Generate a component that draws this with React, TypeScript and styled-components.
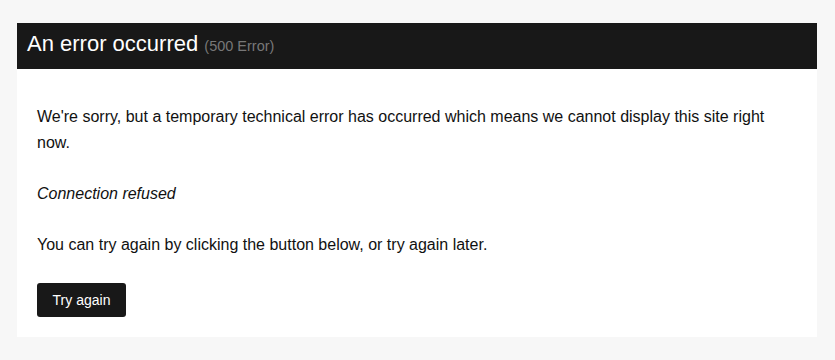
import React from "react";
import styled, { createGlobalStyle } from "styled-components";

const Global = createGlobalStyle`
  html, body {
    margin: 0;
    padding: 0;
    background: #f7f7f7;
    font-family: "Liberation Sans", Arial, sans-serif;
    color: #111;
  }
`;

const Page = styled.div`
  padding: 23px 0 0 17px;
`;

const Card = styled.div`
  width: 800px;
  background: #fff;
`;

const Header = styled.h1`
  margin: 0;
  background: #181818;
  color: #fff;
  font-size: 22px;
  font-weight: normal;
  line-height: 26px;
  padding: 8px 10px 12px;
`;

const Code = styled.span`
  font-size: 14.5px;
  line-height: 1;
  color: #777;
`;

const Body = styled.div`
  padding: 35px 20px 20px;
`;

const Para = styled.p<{ $italic?: boolean }>`
  margin: 0 0 25.6px;
  font-size: 16px;
  line-height: 25.6px;
  font-style: ${(p) => (p.$italic ? "italic" : "normal")};
`;

const Button = styled.button`
  display: block;
  background: #181818;
  color: #fff;
  border: none;
  border-radius: 3px;
  font-family: "Liberation Sans", Arial, sans-serif;
  font-size: 14px;
  line-height: 20px;
  padding: 7px 15px;
  width: 89px;
  cursor: pointer;
`;

export default function App() {
  return (
    <Page>
      <Global />
      <Card>
        <Header>
          An error occurred <Code>(500 Error)</Code>
        </Header>
        <Body>
          <Para>
            We're sorry, but a temporary technical error has occurred which means we cannot display this site right now.
          </Para>
          <Para $italic>Connection refused</Para>
          <Para>You can try again by clicking the button below, or try again later.</Para>
          <Button>Try again</Button>
        </Body>
      </Card>
    </Page>
  );
}
